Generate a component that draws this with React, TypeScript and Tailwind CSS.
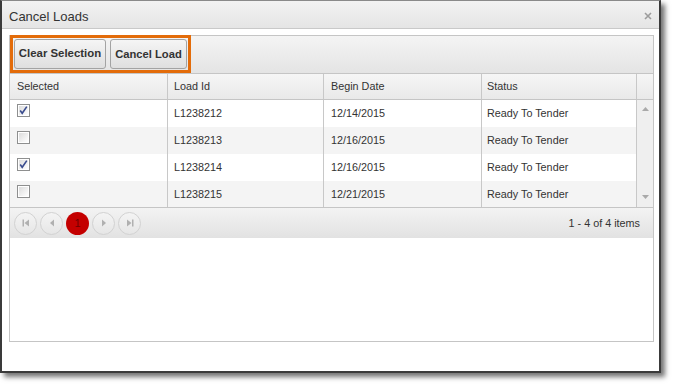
import React from "react";

const font = { fontFamily: '"Liberation Sans", Arial, sans-serif' };

function Check({ checked }: { checked: boolean }) {
  return (
    <svg width="13" height="13" viewBox="0 0 13 13">
      <defs>
        <linearGradient id="cbg" x1="0" y1="0" x2="1" y2="1">
          <stop offset="0" stopColor="#dcdcdc" />
          <stop offset="1" stopColor="#ffffff" />
        </linearGradient>
      </defs>
      <rect x="0.5" y="0.5" width="12" height="12" fill="#fff" stroke="#8e8f8f" />
      <rect x="2" y="2" width="9" height="9" fill="url(#cbg)" />
      {checked && (
        <path d="M3.2 6.6 L5.2 9.3 L9.8 2.6" fill="none" stroke="#3a4c8e" strokeWidth="1.6" />
      )}
    </svg>
  );
}

function PagerBtn({ children }: { children: React.ReactNode }) {
  return (
    <div className="w-[23px] h-[23px] rounded-full border border-[#d2d2d2] bg-gradient-to-b from-[#f4f4f4] to-[#e6e6e6] flex items-center justify-center">
      {children}
    </div>
  );
}

const rows = [
  { sel: true, id: "L1238212", date: "12/14/2015", status: "Ready To Tender", h: "h-[27px]", bg: "bg-white" },
  { sel: false, id: "L1238213", date: "12/16/2015", status: "Ready To Tender", h: "h-[27px]", bg: "bg-[#f4f4f4]" },
  { sel: true, id: "L1238214", date: "12/16/2015", status: "Ready To Tender", h: "h-[27px]", bg: "bg-white" },
  { sel: false, id: "L1238215", date: "12/21/2015", status: "Ready To Tender", h: "h-[26px]", bg: "bg-[#f4f4f4]" },
];

export default function App() {
  return (
    <div className="w-[673px] h-[384px] bg-white overflow-hidden" style={font}>
      <div className="w-[661px] h-[373px] border-t border-x-2 border-b-2 border-[#3a3a3a] border-t-[#8a8a8a] shadow-[4px_4px_5px_rgba(0,0,0,0.55)] flex flex-col bg-white">
        {/* title bar */}
        <div className="h-[28px] shrink-0 border-b border-[#c9c9c9] bg-gradient-to-b from-[#f2f2f2] to-[#e5e5e5] flex items-center justify-between pl-[7px] pr-[7px]">
          <span className="text-[13px] text-[#333] leading-none mt-[4px]">Cancel Loads</span>
          <svg width="8" height="8" viewBox="0 0 8 8" className="mt-[3px]">
            <path d="M1 1 L7 7 M7 1 L1 7" stroke="#9c9c9c" strokeWidth="1.6" />
          </svg>
        </div>
        {/* body */}
        <div className="flex-1 pl-[7px] pt-[6px]">
          <div className="w-[645px] h-[307px] border border-[#c5c5c5] flex flex-col">
            {/* toolbar */}
            <div className="h-[38px] shrink-0 border-b border-[#c5c5c5] bg-gradient-to-b from-[#f4f4f4] to-[#e4e4e4] flex items-start">
              <div className="-mt-px w-[181px] h-[38px] border-[3px] border-[#e36c0a] flex items-start pl-px pt-px gap-[4px]">
                <button className="w-[92px] h-[30px] rounded-[3px] border border-[#a3a3a3] bg-gradient-to-b from-[#f5f5f5] to-[#dfdfdf] text-[11.4px] font-bold text-[#333] flex items-center justify-center">
                  Clear Selection
                </button>
                <button className="w-[77px] h-[30px] rounded-[3px] border border-[#a3a3a3] bg-gradient-to-b from-[#f5f5f5] to-[#dfdfdf] text-[11.2px] font-bold text-[#333] flex items-center justify-center">
                  Cancel Load
                </button>
              </div>
            </div>
            {/* header */}
            <div className="h-[26px] shrink-0 border-b border-[#c5c5c5] bg-gradient-to-b from-[#f6f6f6] to-[#e9e9e9] flex text-[10.8px] text-[#333]">
              <div className="w-[158px] border-r border-[#c8c8c8] pl-[7px] flex items-center">Selected</div>
              <div className="w-[156px] border-r border-[#c8c8c8] pl-[6px] flex items-center">Load Id</div>
              <div className="w-[158px] border-r border-[#c8c8c8] pl-[7px] flex items-center">Begin Date</div>
              <div className="w-[155px] border-r border-[#c8c8c8] pl-[5px] flex items-center">Status</div>
              <div className="flex-1" />
            </div>
            {/* rows + scrollbar */}
            <div className="h-[107px] shrink-0 flex">
              <div className="w-[627px] flex flex-col text-[10.8px] text-[#333]">
                {rows.map((r) => (
                  <div key={r.id} className={`${r.h} ${r.bg} flex`}>
                    <div className="w-[158px] border-r border-[#c8c8c8] pl-[7px] pt-[4px]">
                      <Check checked={r.sel} />
                    </div>
                    <div className="w-[156px] border-r border-[#c8c8c8] pl-[6px] flex items-center">{r.id}</div>
                    <div className="w-[158px] border-r border-[#c8c8c8] pl-[7px] flex items-center">{r.date}</div>
                    <div className="w-[155px] border-r border-[#c8c8c8] pl-[5px] flex items-center">{r.status}</div>
                  </div>
                ))}
              </div>
              <div className="flex-1 bg-[#efefef] flex flex-col items-center justify-between pt-[7px] pb-[8px]">
                <svg width="7" height="4" viewBox="0 0 7 4">
                  <path d="M0 4 L3.5 0 L7 4 Z" fill="#a9a9a9" />
                </svg>
                <svg width="7" height="4" viewBox="0 0 7 4">
                  <path d="M0 0 L3.5 4 L7 0 Z" fill="#a9a9a9" />
                </svg>
              </div>
            </div>
            {/* pager */}
            <div className="h-[31px] shrink-0 border-t border-[#c5c5c5] bg-gradient-to-b from-[#f3f3f3] to-[#e2e2e2] flex items-center pl-[4px] pr-[13px]">
              <div className="flex items-center gap-[3px]">
                <PagerBtn>
                  <svg width="8" height="8" viewBox="0 0 8 8">
                    <rect x="0.5" y="0.5" width="1.5" height="7" fill="#b0b0b0" />
                    <path d="M7 0.5 L2.5 4 L7 7.5 Z" fill="#b0b0b0" />
                  </svg>
                </PagerBtn>
                <PagerBtn>
                  <svg width="8" height="8" viewBox="0 0 8 8">
                    <path d="M6 0.5 L2 4 L6 7.5 Z" fill="#b0b0b0" />
                  </svg>
                </PagerBtn>
                <div className="w-[23px] h-[23px] rounded-full bg-[#c40000] flex items-center justify-center text-[10.8px] text-[#6e0000]">
                  1
                </div>
                <PagerBtn>
                  <svg width="8" height="8" viewBox="0 0 8 8">
                    <path d="M2 0.5 L6 4 L2 7.5 Z" fill="#b0b0b0" />
                  </svg>
                </PagerBtn>
                <PagerBtn>
                  <svg width="8" height="8" viewBox="0 0 8 8">
                    <path d="M1 0.5 L5.5 4 L1 7.5 Z" fill="#b0b0b0" />
                    <rect x="6" y="0.5" width="1.5" height="7" fill="#b0b0b0" />
                  </svg>
                </PagerBtn>
              </div>
              <div className="flex-1" />
              <span className="text-[10.8px] text-[#333]">1 - 4 of 4 items</span>
            </div>
            <div className="flex-1 bg-white" />
          </div>
        </div>
      </div>
    </div>
  );
}
